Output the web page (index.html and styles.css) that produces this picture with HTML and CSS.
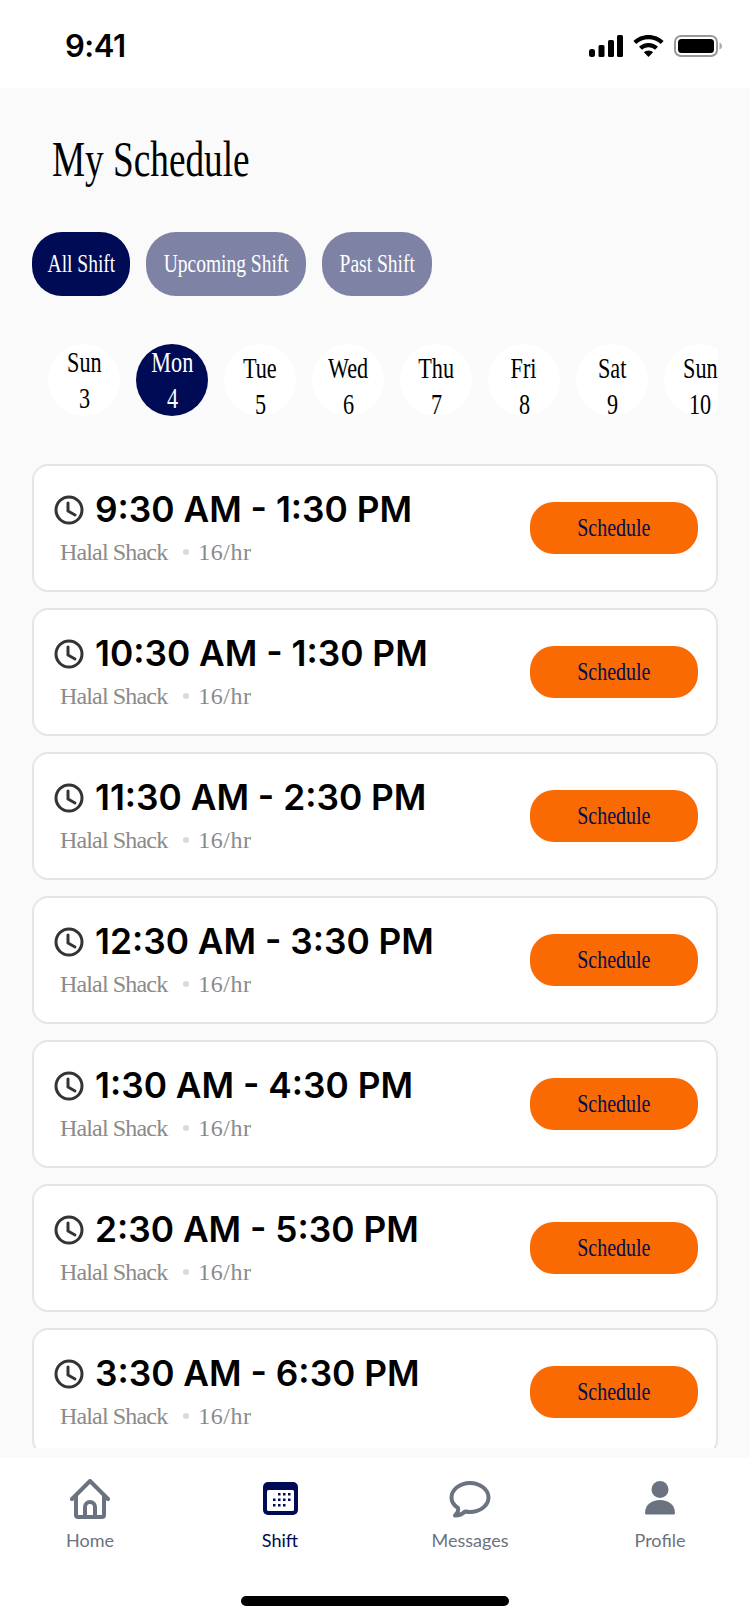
FILE: index.html
```html
<!DOCTYPE html>
<html lang="en">
<head>
<meta charset="utf-8">
<title>My Schedule</title>
<link rel="stylesheet" href="styles.css">
</head>
<body>
<div class="screen">
  <header class="status">
    <span class="clock-time">9:41</span>
    <div class="status-icons">
      <svg class="ic-signal" viewBox="0 0 34 22" width="34" height="22"><rect x="0" y="14" width="6" height="8" rx="2.5"/><rect x="9.5" y="10" width="6" height="12" rx="1.5"/><rect x="19" y="5" width="6" height="17" rx="1.5"/><rect x="28" y="0" width="6" height="22" rx="1.5"/></svg>
      <svg class="ic-wifi" viewBox="0 0 31 22" width="31" height="22"><path d="M15.5 0C9.6 0 4.3 2.3.4 6.1l2.9 3C6.5 6 10.800 4.200 15.500 4.200S24.500 6 27.700 9.100l2.900-3C26.700 2.300 21.400 0 15.500 0z"/><path d="M15.500 8c-3.700 0-7 1.400-9.500 3.800l3 3c1.700-1.600 4-2.600 6.500-2.600s4.800 1 6.500 2.600l3-3C22.500 9.400 19.200 8 15.500 8z"/><path d="M15.500 15.500c-1.800 0-3.400.7-4.600 1.800l4.600 4.700 4.600-4.700c-1.200-1.100-2.800-1.800-4.600-1.800z"/></svg>
      <svg class="ic-battery" viewBox="0 0 48 22" width="48" height="22"><rect x="1" y="1" width="42" height="20" rx="6" fill="none" stroke="#999" stroke-width="2"/><rect x="4" y="4" width="36" height="14" rx="3.500"/><path d="M45.500 7.500c1.500.5 2.500 2 2.500 3.500s-1 3-2.500 3.500z" fill="#aaa"/></svg>
    </div>
  </header>

  <main class="main">
    <h1 class="title"><span class="nar-left">My Schedule</span></h1>

    <div class="chips">
      <button class="chip chip-all"><span class="nar">All Shift</span></button>
      <button class="chip chip-up"><span class="nar">Upcoming Shift</span></button>
      <button class="chip chip-past"><span class="nar">Past Shift</span></button>
    </div>

    <div class="days">
      <div class="day"><span class="nar">Sun</span><span class="nar">3</span></div>
      <div class="day day-active"><span class="nar">Mon</span><span class="nar">4</span></div>
      <div class="day day-low"><span class="nar">Tue</span><span class="nar">5</span></div>
      <div class="day day-low"><span class="nar">Wed</span><span class="nar">6</span></div>
      <div class="day day-low"><span class="nar">Thu</span><span class="nar">7</span></div>
      <div class="day day-low"><span class="nar">Fri</span><span class="nar">8</span></div>
      <div class="day day-low"><span class="nar">Sat</span><span class="nar">9</span></div>
      <div class="day day-low"><span class="nar">Sun</span><span class="nar">10</span></div>
    </div>

    <div class="list">
      <article class="card">
        <div class="card-info">
          <div class="time"><svg class="ic-clock" viewBox="0 0 30 30" width="30" height="30"><circle cx="15" cy="15" r="13" /><path d="M14 8v8l7 4"/></svg><span>9:30 AM - 1:30 PM</span></div>
          <div class="meta"><span class="meta-name">Halal Shack</span><i class="dot"></i><span class="meta-rate">16/hr</span></div>
        </div>
        <button class="cta"><span class="nar">Schedule</span></button>
      </article>
      <article class="card">
        <div class="card-info">
          <div class="time"><svg class="ic-clock" viewBox="0 0 30 30" width="30" height="30"><circle cx="15" cy="15" r="13" /><path d="M14 8v8l7 4"/></svg><span>10:30 AM - 1:30 PM</span></div>
          <div class="meta"><span class="meta-name">Halal Shack</span><i class="dot"></i><span class="meta-rate">16/hr</span></div>
        </div>
        <button class="cta"><span class="nar">Schedule</span></button>
      </article>
      <article class="card">
        <div class="card-info">
          <div class="time"><svg class="ic-clock" viewBox="0 0 30 30" width="30" height="30"><circle cx="15" cy="15" r="13" /><path d="M14 8v8l7 4"/></svg><span>11:30 AM - 2:30 PM</span></div>
          <div class="meta"><span class="meta-name">Halal Shack</span><i class="dot"></i><span class="meta-rate">16/hr</span></div>
        </div>
        <button class="cta"><span class="nar">Schedule</span></button>
      </article>
      <article class="card">
        <div class="card-info">
          <div class="time"><svg class="ic-clock" viewBox="0 0 30 30" width="30" height="30"><circle cx="15" cy="15" r="13" /><path d="M14 8v8l7 4"/></svg><span>12:30 AM - 3:30 PM</span></div>
          <div class="meta"><span class="meta-name">Halal Shack</span><i class="dot"></i><span class="meta-rate">16/hr</span></div>
        </div>
        <button class="cta"><span class="nar">Schedule</span></button>
      </article>
      <article class="card">
        <div class="card-info">
          <div class="time"><svg class="ic-clock" viewBox="0 0 30 30" width="30" height="30"><circle cx="15" cy="15" r="13" /><path d="M14 8v8l7 4"/></svg><span>1:30 AM - 4:30 PM</span></div>
          <div class="meta"><span class="meta-name">Halal Shack</span><i class="dot"></i><span class="meta-rate">16/hr</span></div>
        </div>
        <button class="cta"><span class="nar">Schedule</span></button>
      </article>
      <article class="card">
        <div class="card-info">
          <div class="time"><svg class="ic-clock" viewBox="0 0 30 30" width="30" height="30"><circle cx="15" cy="15" r="13" /><path d="M14 8v8l7 4"/></svg><span>2:30 AM - 5:30 PM</span></div>
          <div class="meta"><span class="meta-name">Halal Shack</span><i class="dot"></i><span class="meta-rate">16/hr</span></div>
        </div>
        <button class="cta"><span class="nar">Schedule</span></button>
      </article>
      <article class="card">
        <div class="card-info">
          <div class="time"><svg class="ic-clock" viewBox="0 0 30 30" width="30" height="30"><circle cx="15" cy="15" r="13" /><path d="M14 8v8l7 4"/></svg><span>3:30 AM - 6:30 PM</span></div>
          <div class="meta"><span class="meta-name">Halal Shack</span><i class="dot"></i><span class="meta-rate">16/hr</span></div>
        </div>
        <button class="cta"><span class="nar">Schedule</span></button>
      </article>
    </div>
  </main>

  <nav class="tabbar">
    <div class="tabs">
      <div class="tab">
        <svg class="tab-icon" viewBox="0 0 40 40" width="40" height="40"><path class="line" d="M2 20 20 2l18 18M6 17v19a2 2 0 0 0 2 2h24a2 2 0 0 0 2-2V17M15 38V28a5 5 0 0 1 10 0v10"/></svg>
        <span>Home</span>
      </div>
      <div class="tab tab-active">
        <svg class="tab-icon" viewBox="0 0 40 40" width="40" height="40"><rect x="3" y="3" width="35" height="33" rx="5" fill="#000b55"/><rect x="7" y="11" width="27" height="21" rx="1.500" fill="#fff"/><g fill="#000b55"><rect x="18" y="14" width="2.500" height="2.500"/><rect x="23" y="14" width="2.500" height="2.500"/><rect x="28" y="14" width="2.500" height="2.500"/><rect x="13" y="19.500" width="2.500" height="2.500"/><rect x="18" y="19.500" width="2.500" height="2.500"/><rect x="23" y="19.500" width="2.500" height="2.500"/><rect x="28" y="19.500" width="2.500" height="2.500"/><rect x="13" y="25" width="2.500" height="2.500"/><rect x="18" y="25" width="2.500" height="2.500"/><rect x="23" y="25" width="2.500" height="2.500"/></g></svg>
        <span>Shift</span>
      </div>
      <div class="tab">
        <svg class="tab-icon" viewBox="0 0 42 40" width="42" height="40"><path class="line" d="M21 4C11 4 2.500 10.500 2.500 18.500c0 4.500 2.500 8 6.500 10.500.5 2-.5 5-3 7.500 3.500 0 7-1 10-4 1.500.3 3.300.5 5 .5 10 0 18.500-6.500 18.500-14.500S31 4 21 4z"/></svg>
        <span>Messages</span>
      </div>
      <div class="tab">
        <svg class="tab-icon" viewBox="0 0 40 40" width="40" height="40"><circle cx="20" cy="10.500" r="8.500" fill="#6b7280"/><path d="M5 34c0-8 6.500-13 15-13s15 5 15 13a1.500 1.500 0 0 1-1.500 1.500h-27A1.500 1.500 0 0 1 5 34z" fill="#6b7280"/></svg>
        <span>Profile</span>
      </div>
    </div>
    <div class="home-indicator"></div>
  </nav>
</div>
</body>
</html>
```
FILE: styles.css
```css
* { box-sizing: border-box; }
html, body { margin: 0; padding: 0; background: #fff; }
body { width: 750px; height: 1624px; overflow: hidden; font-family: "Liberation Serif", serif; }
button { border: 0; padding: 0; font: inherit; }

.screen { width: 750px; height: 1624px; display: flex; flex-direction: column; overflow: hidden; }

.status { height: 88px; flex: none; background: #fff; display: flex; justify-content: space-between; align-items: flex-start; padding: 28px 28px 0 65px; }
.clock-time { font: 600 31px/36px Inter, sans-serif; color: #000; letter-spacing: -.5px; }
.status-icons { display: flex; gap: 10px; margin-top: 7px; align-items: center; }
.status-icons svg { display: block; fill: #000; }

.main { flex: 1; min-height: 0; background: #fafafa; display: flex; flex-direction: column; padding-bottom: 10px; }

.nar { display: inline-block; transform: scaleX(.74); white-space: nowrap; }
.nar-left { display: inline-block; transform: scaleX(.745); transform-origin: left center; white-space: nowrap; }

.title { margin: 0; padding: 42px 0 0 52px; font-weight: 400; font-size: 50px; line-height: 58px; color: #000; height: 144px; }

.chips { display: flex; gap: 16px; padding-left: 32px; flex: none; }
.chip { height: 64px; border-radius: 30px; color: #fff; font-size: 25px; display: flex; align-items: center; justify-content: center; }
.chip .nar { transform: scaleX(.78); }
.chip-all { width: 98px; background: #000b55; }
.chip-up { width: 160px; background: #7e83a6; }
.chip-past { width: 110px; background: #7e83a6; }

.days { display: flex; gap: 16px; margin: 48px 32px 0 48px; padding-bottom: 8px; overflow: hidden; flex: none; }
.day { flex: none; width: 72px; height: 72px; border-radius: 50%; background: #fff; color: #000; font-size: 30px; line-height: 36px; display: flex; flex-direction: column; align-items: center; }
.day-active { background: #000b55; color: #fff; }
.day-low { padding-top: 6px; }

.list { flex: 1; min-height: 0; overflow: hidden; margin-top: 40px; padding: 0 32px; display: flex; flex-direction: column; gap: 16px; }
.card { flex: none; height: 128px; background: #fff; border: 2px solid #e5e5e5; border-radius: 16px; display: flex; align-items: center; justify-content: space-between; padding: 0 18px 0 20px; }
.card-info { display: flex; flex-direction: column; }
.time { display: flex; align-items: center; gap: 11px; font: 600 35.3px/42px Inter, sans-serif; color: #000; }
.ic-clock { fill: none; stroke: #333; stroke-width: 3; stroke-linecap: round; stroke-linejoin: round; flex: none; }
.meta { display: flex; align-items: center; margin: 6px 0 0 6px; color: #8a8a8a; font-size: 24px; line-height: 30px; }
.meta-name { letter-spacing: -.85px; }
.meta-rate { letter-spacing: .5px; }
.dot { width: 6px; height: 6px; border-radius: 50%; background: #d9d9d9; margin: 0 9px 0 16px; }

.cta { width: 168px; height: 52px; border-radius: 24px; background: #f96b02; color: #000b55; font-size: 25px; display: flex; align-items: center; justify-content: center; }
.cta .nar { transform: scaleX(.8); }

.tabbar { flex: none; height: 166px; background: #fff; display: flex; flex-direction: column; align-items: center; }
.tabs { display: grid; grid-template-columns: repeat(4, 190px); padding-top: 21px; width: 760px; }
.tab { display: flex; flex-direction: column; align-items: center; color: #6b7280; font: 400 18px/24px Lato, sans-serif; }
.tab-icon { display: block; margin-bottom: 9px; }
.tab-active { color: #000b55; }
.line { fill: none; stroke: #6b7280; stroke-width: 4; stroke-linecap: round; stroke-linejoin: round; }
.home-indicator { width: 268px; height: 10px; border-radius: 5px; background: #000; margin-top: 44px; }
```
